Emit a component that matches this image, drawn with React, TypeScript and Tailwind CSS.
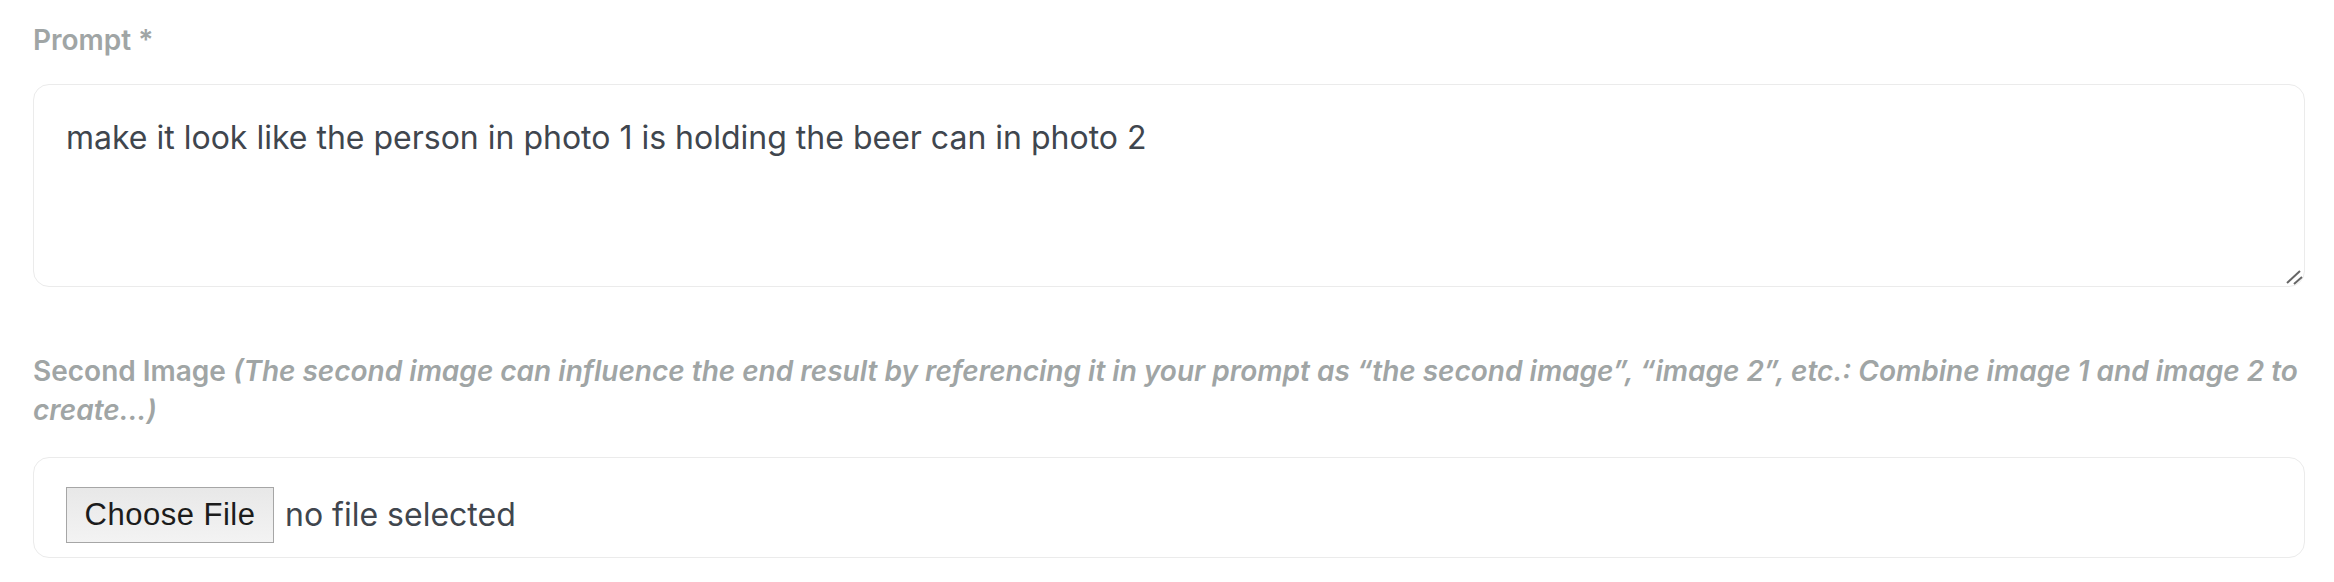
import React from 'react';

const App: React.FC = () => {
  return (
    <div className="min-h-screen bg-white pl-[33px] pr-[29px] pt-[21px] font-['Inter',sans-serif]">
      <label className="block text-[28px] font-semibold leading-[38px] text-[#a0a5a5]">
        Prompt *
      </label>
      <div className="relative mt-[25px]">
        <textarea
          className="block h-[203px] w-full resize-none rounded-[16px] border border-[#ebebeb] bg-white px-8 pt-[32px] text-[32px] leading-[42px] text-[#40464e] outline-none"
          defaultValue="make it look like the person in photo 1 is holding the beer can in photo 2"
        />
        <svg
          className="absolute bottom-[2px] right-[1px]"
          width="18"
          height="16"
          viewBox="0 0 18 16"
        >
          <line x1="1" y1="14" x2="14" y2="2" stroke="#666" strokeWidth="2" />
          <line x1="8" y1="15" x2="16" y2="8" stroke="#666" strokeWidth="2" />
        </svg>
      </div>

      <div className="mt-[65px] text-[28px] font-semibold leading-[38.5px] text-[#a0a5a5]">
        Second Image{' '}
        <span className="italic">
          (The second image can influence the end result by referencing it in your prompt as
          “the second image”, “image 2”, etc.: Combine image 1 and image 2 to create...)
        </span>
      </div>

      <div className="mt-[28px] flex h-[101px] items-start rounded-[16px] border border-[#ebebeb] px-8 pt-[29px]">
        <div className="flex items-center">
          <span className="flex h-[56px] w-[208px] items-center justify-center border border-[#a6a6a6] bg-gradient-to-b from-[#e8e8e8] to-[#f3f3f3] font-['Liberation_Sans',sans-serif] text-[31px] tracking-[0.5px] text-[#1c1c1c]">
            Choose File
          </span>
          <span className="ml-[11px] text-[32px] text-[#40464e]">no file selected</span>
        </div>
      </div>
    </div>
  );
};

export default App;
